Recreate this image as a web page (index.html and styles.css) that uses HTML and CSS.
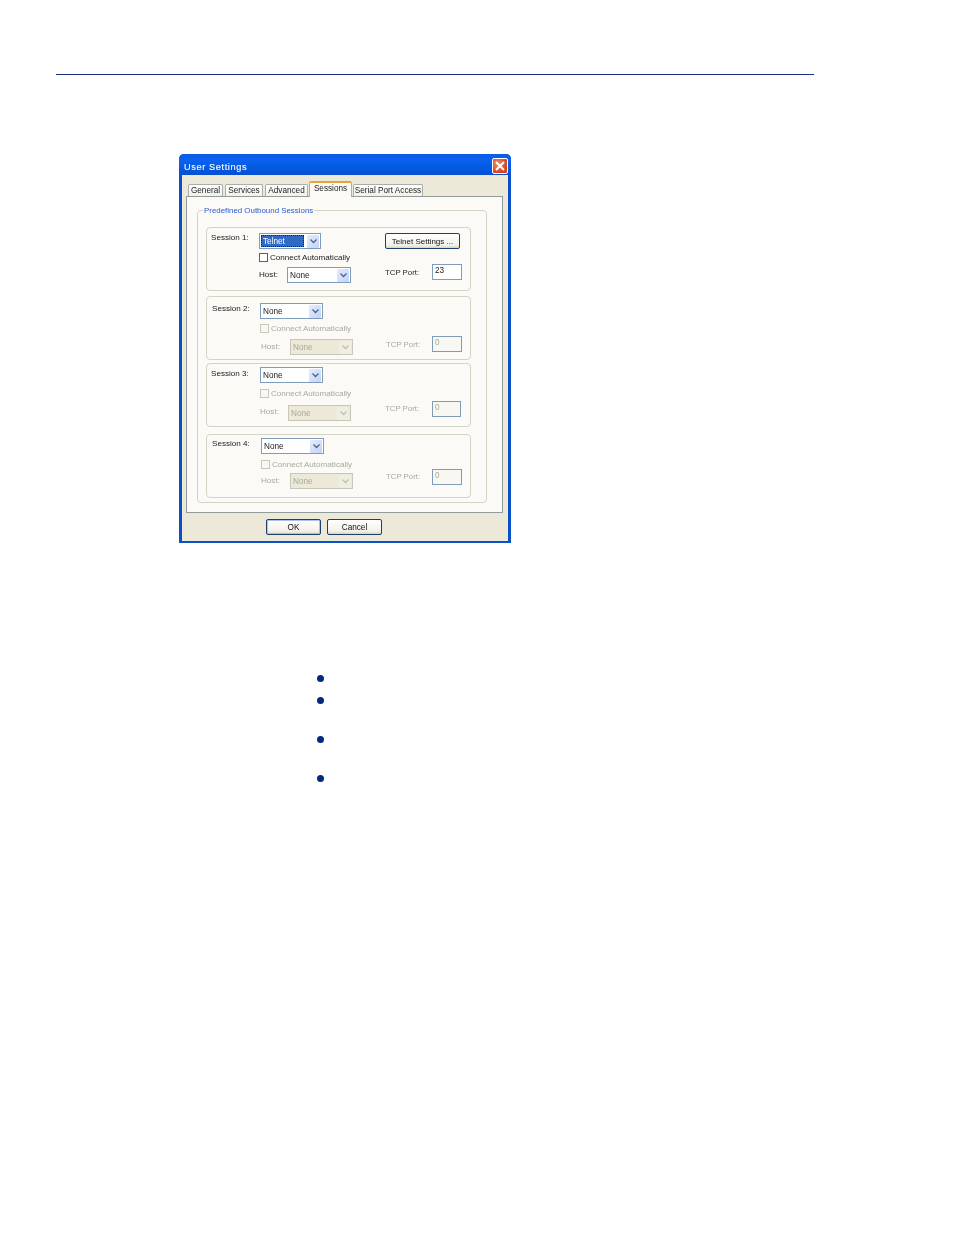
FILE: index.html
```html
<!DOCTYPE html>
<html lang="en">
<head>
<meta charset="utf-8">
<title>User Settings</title>
<link rel="stylesheet" href="styles.css">
</head>
<body>
<div class="rule"></div>
<section class="dialog">
  <header class="titlebar">
    <span class="title">User Settings</span>
    <span class="close"><svg width="16" height="16" viewBox="0 0 16 16"><path d="M4 4l8 8M12 4l-8 8" stroke="#fff" stroke-width="2" fill="none"/></svg></span>
  </header>
  <div class="body">
    <nav class="tabs">
      <span class="tab t-general">General</span>
      <span class="tab t-services">Services</span>
      <span class="tab t-advanced">Advanced</span>
      <span class="tab active">Sessions</span>
      <span class="tab t-serial">Serial Port Access</span>
    </nav>
    <div class="panel">
      <div class="group">
        <span class="legend">Predefined Outbound Sessions</span>

        <div class="session s1">
          <div class="row r1">
            <span class="lbl name">Session 1:</span>
            <span class="select sel-a"><span class="val focus">Telnet</span><span class="arrow"><svg width="9" height="6" viewBox="0 0 9 6"><path d="M1.5 1.5l3 3 3-3" stroke="#4a6490" stroke-width="1.3" fill="none"/></svg></span></span>
            <span class="btn telnet">Telnet Settings ...</span>
          </div>
          <div class="row r2"><span class="check"></span><span class="lbl">Connect Automatically</span></div>
          <div class="row r3">
            <span class="lbl host">Host:</span>
            <span class="select sel-b"><span class="val">None</span><span class="arrow"><svg width="9" height="6" viewBox="0 0 9 6"><path d="M1.5 1.5l3 3 3-3" stroke="#4a6490" stroke-width="1.3" fill="none"/></svg></span></span>
            <span class="lbl tcp">TCP Port:</span>
            <span class="input">23</span>
          </div>
        </div>

        <div class="session s2 off">
          <div class="row r1">
            <span class="lbl name">Session 2:</span>
            <span class="select sel-a"><span class="val">None</span><span class="arrow"><svg width="9" height="6" viewBox="0 0 9 6"><path d="M1.5 1.5l3 3 3-3" stroke="#4a6490" stroke-width="1.3" fill="none"/></svg></span></span>
          </div>
          <div class="row r2"><span class="check"></span><span class="lbl">Connect Automatically</span></div>
          <div class="row r3">
            <span class="lbl host">Host:</span>
            <span class="select sel-b"><span class="val">None</span><span class="arrow"><svg width="9" height="6" viewBox="0 0 9 6"><path d="M1.5 1.5l3 3 3-3" stroke="#c0c0b0" stroke-width="1.3" fill="none"/></svg></span></span>
            <span class="lbl tcp">TCP Port:</span>
            <span class="input">0</span>
          </div>
        </div>

        <div class="session s3 off">
          <div class="row r1">
            <span class="lbl name">Session 3:</span>
            <span class="select sel-a"><span class="val">None</span><span class="arrow"><svg width="9" height="6" viewBox="0 0 9 6"><path d="M1.5 1.5l3 3 3-3" stroke="#4a6490" stroke-width="1.3" fill="none"/></svg></span></span>
          </div>
          <div class="row r2"><span class="check"></span><span class="lbl">Connect Automatically</span></div>
          <div class="row r3">
            <span class="lbl host">Host:</span>
            <span class="select sel-b"><span class="val">None</span><span class="arrow"><svg width="9" height="6" viewBox="0 0 9 6"><path d="M1.5 1.5l3 3 3-3" stroke="#c0c0b0" stroke-width="1.3" fill="none"/></svg></span></span>
            <span class="lbl tcp">TCP Port:</span>
            <span class="input">0</span>
          </div>
        </div>

        <div class="session s4 off">
          <div class="row r1">
            <span class="lbl name">Session 4:</span>
            <span class="select sel-a"><span class="val">None</span><span class="arrow"><svg width="9" height="6" viewBox="0 0 9 6"><path d="M1.5 1.5l3 3 3-3" stroke="#4a6490" stroke-width="1.3" fill="none"/></svg></span></span>
          </div>
          <div class="row r2"><span class="check"></span><span class="lbl">Connect Automatically</span></div>
          <div class="row r3">
            <span class="lbl host">Host:</span>
            <span class="select sel-b"><span class="val">None</span><span class="arrow"><svg width="9" height="6" viewBox="0 0 9 6"><path d="M1.5 1.5l3 3 3-3" stroke="#c0c0b0" stroke-width="1.3" fill="none"/></svg></span></span>
            <span class="lbl tcp">TCP Port:</span>
            <span class="input">0</span>
          </div>
        </div>
      </div>
    </div>
    <footer class="actions">
      <span class="btn ok">OK</span>
      <span class="btn cancel">Cancel</span>
    </footer>
  </div>
</section>
<ul class="dots">
  <li class="d1"></li>
  <li class="d2"></li>
  <li class="d3"></li>
  <li class="d4"></li>
</ul>
</body>
</html>
```
FILE: styles.css
```css
* { box-sizing: border-box; }
html, body { margin: 0; padding: 0; background: #fff; }
body { width: 954px; height: 1235px; overflow: hidden; font-family: "Liberation Sans", Arial, sans-serif; }

.rule { height: 1px; width: 758px; margin: 74px 0 0 56px; background: #16307f; }

.dialog {
  width: 332px; height: 389px; margin: 79px 0 0 179px;
  background: #0a50c8; border-radius: 5px 5px 0 0;
  padding: 0 2px 2px; display: flex; flex-direction: column;
  filter: blur(0.4px);
}
.titlebar {
  height: 21px; flex: none; margin: 0 -2px; padding: 0 3px 0 5px;
  display: flex; align-items: center; justify-content: space-between;
  background: linear-gradient(#0a5ce6, #0a62ee 30%, #0355dc 80%, #0a4fd0);
  border-radius: 5px 5px 0 0;
}
.title { color: #f2f4fa; font-size: 9.2px; letter-spacing: 0.62px; font-weight: 400; margin-top: 5px; -webkit-text-stroke: 0.15px #fff; }
.close {
  width: 16px; height: 16px; margin-top: 3px; border-radius: 2px; border: 1px solid #fff;
  background: radial-gradient(circle at 35% 35%, #f0906c, #d8431f 70%);
  display: flex; align-items: center; justify-content: center;
}
.close svg { flex: none; margin: -1px; }

.body { flex: 1; background: #ece9d8; border-left: 1px solid #0a4fc8; border-right: 1px solid #0a4fc8; padding: 6px 4px 0 4px; display: flex; flex-direction: column; min-height: 0; }

.tabs { height: 15px; display: flex; align-items: flex-end; flex: none; padding-left: 2px; position: relative; z-index: 1; }
.tab {
  height: 12px; font-size: 8.2px; color: #222; border: 1px solid #a8aeb0; border-bottom: 0;
  border-radius: 2px 2px 0 0; background: linear-gradient(#fff, #f3f1e6);
  display: flex; align-items: center; justify-content: center; white-space: nowrap;
}
.t-general { width: 35px; margin-right: 2px; }
.t-services { width: 38px; margin-right: 2px; }
.t-advanced { width: 43px; margin-right: 1px; }
.tab.active { width: 43px; height: 16px; margin-right: 1px; margin-bottom: -1px; background: #fbfaf5; border-top: 2px solid #e8a33a; padding-bottom: 3px; }
.t-serial { width: 70px; }

.panel { width: 317px; height: 317px; flex: none; border: 1px solid #919b9c; background: #fbfaf6; padding: 13px 15px 0 10px; }
.group { height: 293px; width: 290px; border: 1px solid #d4d4c4; border-radius: 4px; padding: 0 15px 0 8px; position: relative; }
.legend { position: absolute; left: 5px; top: -5px; padding: 0 1px; background: #fbfaf6; color: #2a58d0; font-size: 7.9px; line-height: 10px; white-space: nowrap; }

.session { width: 265px; height: 64px; border: 1px solid #d4d4c4; border-radius: 4px; padding: var(--top) 0 0 var(--left); }
.s1 { --top: 5px; --left: 4px; --name: 48px; --gap1: 4px; --gap2: 2px; --hostm: 48px; --hostw: 28px; --tcpm: 34px; --tcpw: 47px; --nudge: 0px; --hosty: 6px; --tcpy: 4px; --selb: 3px; margin-top: 16px; }
.s2 { --top: 6px; --left: 5px; --name: 48px; --gap1: 5px; --gap2: 3px; --hostm: 49px; --hostw: 29px; --tcpm: 33px; --tcpw: 46px; --nudge: 1px; --hosty: 6px; --tcpy: 4px; --selb: 3px; margin-top: 5px; }
.s3 { --top: 3px; --left: 4px; --name: 49px; --gap1: 6px; --gap2: 3px; --hostm: 49px; --hostw: 28px; --tcpm: 34px; --tcpw: 47px; --nudge: 2px; --hosty: 6px; --tcpy: 3px; --selb: 4px; margin-top: 3px; }
.s4 { --top: 3px; --left: 5px; --name: 49px; --gap1: 6px; --gap2: 0px; --hostm: 49px; --hostw: 29px; --tcpm: 33px; --tcpw: 46px; --nudge: 1px; --hosty: 7px; --tcpy: 3px; --selb: 4px; margin-top: 7px; }

.row { display: flex; align-items: flex-start; }
.r1 { height: 16px; }
.r2 { height: 9px; margin-top: var(--gap1); padding-left: var(--name); align-items: center; }
.r3 { height: 20px; margin-top: var(--gap2); }

.lbl { font-size: 8.1px; line-height: 10px; color: #222; white-space: nowrap; }
.name { width: var(--name); margin-top: var(--nudge); }
.host { margin-left: var(--hostm); width: var(--hostw); margin-top: var(--hosty); }
.tcp { margin-left: var(--tcpm); width: var(--tcpw); margin-top: var(--tcpy); font-size: 7.8px; }

.select { height: 16px; border: 1px solid #7f9db9; background: #fff; display: flex; align-items: center; justify-content: space-between; padding: 1px; font-size: 8.2px; color: #222; flex: none; }
.sel-a { width: 63px; }
.sel-b { width: 63px; margin-top: var(--selb); }
.s1 .sel-a { width: 62px; }
.s1 .sel-b { width: 64px; }
.val { padding-left: 1px; flex: 1; line-height: 14px; height: 12px; }
.val.focus { background: #316ac5; color: #fff; outline: 1px dotted #222; outline-offset: -1px; margin-right: 3px; padding-left: 2px; overflow: hidden; }
.arrow { width: 12px; height: 13px; flex: none; background: linear-gradient(135deg, #e4ecfc, #c4d3f6); display: flex; align-items: center; justify-content: center; border-radius: 1px; }

.check { width: 9px; height: 9px; flex: none; border: 1px solid #4a6478; background: #fff; margin-right: 2px; }

.input { display: block; width: 30px; height: 16px; flex: none; border: 1px solid #7f9db9; background: #fff; font-size: 8.2px; line-height: 11px; padding-left: 2px; color: #222; }
.s3 .input { width: 29px; }

.btn { height: 16px; border: 1px solid #1c3f6e; border-radius: 2px; background: linear-gradient(#fff, #f2f1e8 80%, #d8d4c4); font-size: 8.2px; color: #111; display: flex; align-items: center; justify-content: center; white-space: nowrap; flex: none; }
.telnet { width: 75px; margin-left: 64px; font-size: 8px; }

.off .r2 .lbl, .off .host, .off .tcp { color: #a9a99c; }
.off .r2 .check { border-color: #c8c8b8; background: #f8f7f2; }
.off .sel-b { background: #ece9d8; border-color: #c9c7ba; color: #a9a99c; }
.off .sel-b .arrow { background: #f0eee2; }
.off .input { background: #f8f7f2; color: #a9a99c; }

.actions { display: flex; padding: 6px 0 0 80px; gap: 6px; }
.ok { width: 55px; border-color: #1c3f6e; box-shadow: inset 0 0 0 1px #a9c3ee; }
.cancel { width: 55px; }

.dots { list-style: none; margin: 132px 0 0 317px; padding: 0; }
.dots li { width: 7px; height: 7px; border-radius: 50%; background: #002a7f; }
.d2 { margin-top: 15px; }
.d3 { margin-top: 32px; }
.d4 { margin-top: 32px; }
```
